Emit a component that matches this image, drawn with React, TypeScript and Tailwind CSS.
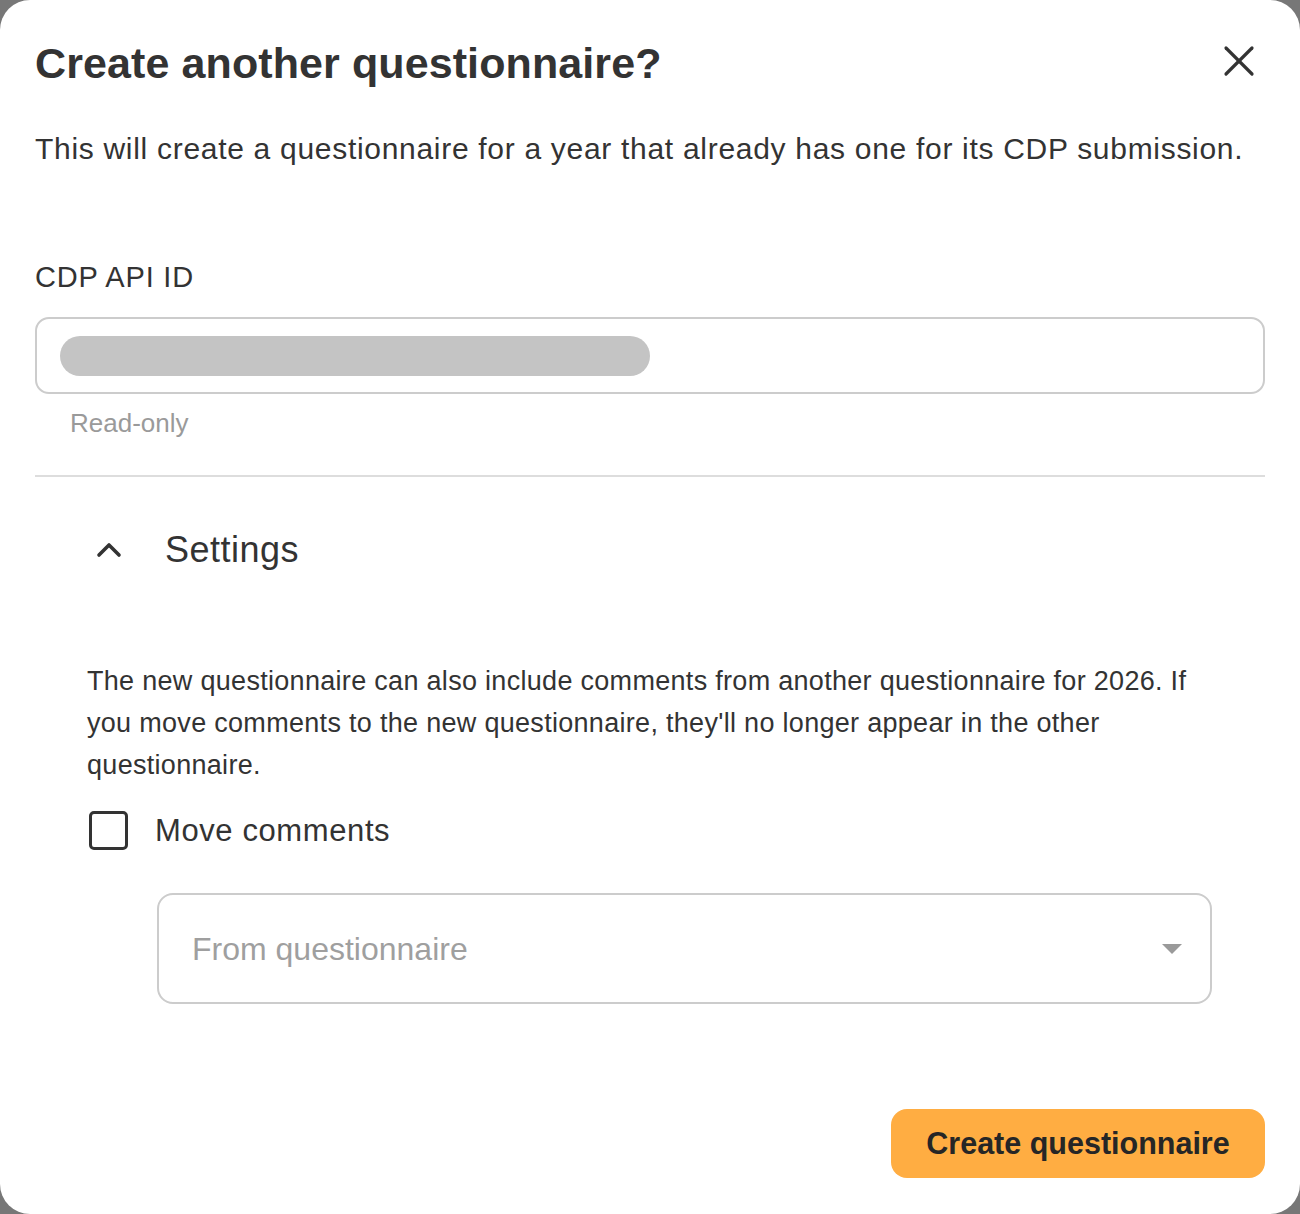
import { useState } from "react";

function CloseIcon() {
  return (
    <svg width="32" height="32" viewBox="0 0 32 32" fill="none" stroke="#333" strokeWidth="3.2" strokeLinecap="round">
      <path d="M3 3 L29 29" />
      <path d="M29 3 L3 29" />
    </svg>
  );
}

function ChevronUp() {
  return (
    <svg width="26" height="16" viewBox="0 0 26 16" fill="none" stroke="#333" strokeWidth="3.6" strokeLinecap="round" strokeLinejoin="round">
      <path d="M3 13 L13 3 L23 13" />
    </svg>
  );
}

export default function App() {
  const [checked, setChecked] = useState(false);

  return (
    <div className="w-[1300px] h-[1214px] bg-[#777777] font-['Liberation_Sans',sans-serif] text-[#333333]">
      <div className="h-full bg-white rounded-[30px] px-[35px] pt-[37px] flex flex-col">
        <div className="flex items-start justify-between">
          <h1 className="text-[43px] leading-[52px] font-bold tracking-[0.1px]">Create another questionnaire?</h1>
          <button className="mt-[8px] mr-[10px]">
            <CloseIcon />
          </button>
        </div>

        <p className="mt-[42px] text-[30px] leading-[36px] tracking-[0.7px]">
          This will create a questionnaire for a year that already has one for its CDP submission.
        </p>

        <label className="mt-[93px] text-[29px] leading-[34px] tracking-[0.8px]">CDP API ID</label>
        <div className="mt-[23px] h-[77px] rounded-[14px] border-2 border-[#cccccc] flex items-center px-[23px]">
          <div className="h-[40px] w-[590px] rounded-full bg-[#c4c4c4]" />
        </div>
        <span className="mt-[14px] ml-[35px] text-[26px] leading-[30px] text-[#9a9a9a]">Read-only</span>

        <div className="mt-[37px] h-[2px] bg-[#dddddd]" />

        <div className="mt-[53px] h-[40px] flex items-center pl-[61px]">
          <ChevronUp />
          <span className="ml-[43px] text-[36px] leading-[40px] tracking-[0.5px]">Settings</span>
        </div>

        <div className="pl-[52px] pr-[60px]">
          <p className="mt-[90px] text-[27px] leading-[42px] tracking-[0.3px]">
            The new questionnaire can also include comments from another questionnaire for 2026. If you move comments to the new questionnaire, they'll no longer appear in the other questionnaire.
          </p>

          <label className="mt-[25px] flex items-center gap-[27px] cursor-pointer">
            <span
              onClick={() => setChecked(!checked)}
              className="w-[39px] h-[39px] ml-[2px] rounded-[5px] border-[3px] border-[#333333] bg-white"
            />
            <span className="text-[31px] leading-[38px] tracking-[0.6px]">Move comments</span>
          </label>

          <div className="mt-[43px] ml-[70px] mr-[-7px] h-[111px] rounded-[16px] border-2 border-[#cccccc] flex items-center justify-between pl-[33px] pr-[28px]">
            <span className="text-[32px] text-[#9f9f9f]">From questionnaire</span>
            <svg width="20" height="10" viewBox="0 0 20 10">
              <path d="M0 0 L20 0 L10 10 Z" fill="#9a9a9a" />
            </svg>
          </div>
        </div>

        <div className="mt-[105px] flex justify-end">
          <button className="h-[69px] w-[374px] rounded-[16px] bg-[#ffad42] text-[30.5px] font-bold text-[#262626]">
            Create questionnaire
          </button>
        </div>
      </div>
    </div>
  );
}
